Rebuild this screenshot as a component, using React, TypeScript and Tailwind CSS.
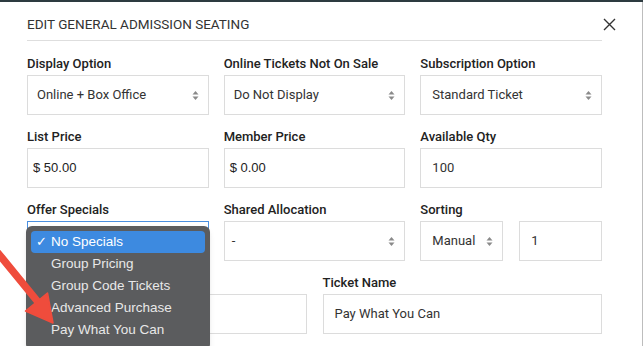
import React from "react";

const SelectArrows = () => (
    <svg width="7" height="11" viewBox="0 0 7 11" className="shrink-0">
        <path d="M3.5 1 L6.5 4.5 L0.5 4.5 Z" fill="#8a8a8a" />
        <path d="M3.5 10 L6.5 6.5 L0.5 6.5 Z" fill="#8a8a8a" />
    </svg>
);

const Label = ({ text }: { text: string }) => (
    <div className="h-[16px] leading-[16px] mb-[3px] text-[13px] font-medium text-[#222] whitespace-nowrap">{text}</div>
);

const SelectBox = ({ value, pl = "pl-[9px]" }: { value: string; pl?: string }) => (
    <div className={`h-[40px] border border-[#dcdcdc] flex items-center justify-between ${pl} pr-[9px] text-[13px] text-[#333]`}>
        <span className="whitespace-nowrap">{value}</span>
        <SelectArrows />
    </div>
);

const TextBox = ({ value, price }: { value: string; price?: boolean }) => (
    <div
        className={
            price
                ? "h-[40px] border border-[#dcdcdc] flex items-center pl-[5px] text-[13px] text-[#222] font-['Liberation_Sans',sans-serif]"
                : "h-[40px] border border-[#dcdcdc] flex items-center pl-[11px] text-[13px] text-[#333]"
        }
    >
        {value}
    </div>
);

const specials = ["No Specials", "Group Pricing", "Group Code Tickets", "Advanced Purchase", "Pay What You Can"];

const App = () => {
    return (
        <div className="relative w-[643px] h-[346px] overflow-hidden bg-white border-t-2 border-[#2d3b40] font-['Roboto',sans-serif]">
            <div className="h-full border-r border-[#bdbdbd] pl-[27px] pr-[40px]">
                {/* header */}
                <section className="h-[39px] pt-[7px] flex items-center justify-between border-b border-[#dedede]">
                    <span className="text-[13.5px] text-[#333]">EDIT GENERAL ADMISSION SEATING</span>
                    <svg width="13" height="13" viewBox="0 0 13 13" className="-mr-[14px]">
                        <path d="M1 1 L12 12 M12 1 L1 12" stroke="#333" strokeWidth="1.4" />
                    </svg>
                </section>

                <section className="flex flex-col gap-y-[14px] pt-[15px]">
                    <section className="grid grid-cols-3 gap-x-[15px]">
                        <div>
                            <Label text="Display Option" />
                            <SelectBox value="Online + Box Office" />
                        </div>
                        <div>
                            <Label text="Online Tickets Not On Sale" />
                            <SelectBox value="Do Not Display" />
                        </div>
                        <div>
                            <Label text="Subscription Option" />
                            <SelectBox value="Standard Ticket" pl="pl-[11px]" />
                        </div>
                    </section>

                    <section className="grid grid-cols-3 gap-x-[15px]">
                        <div>
                            <Label text="List Price" />
                            <TextBox value="$ 50.00" price />
                        </div>
                        <div>
                            <Label text="Member Price" />
                            <TextBox value="$ 0.00" price />
                        </div>
                        <div>
                            <Label text="Available Qty" />
                            <TextBox value="100" />
                        </div>
                    </section>

                    <section className="grid grid-cols-3 gap-x-[15px]">
                        <div className="relative">
                            <Label text="Offer Specials" />
                            <div className="h-[40px] border border-[#4a8fe0]" />
                            {/* open dropdown */}
                            <div className="absolute z-20 top-[24px] -left-[1px] w-[184px] h-[124px] rounded-[6px] bg-[#5b5c5e] pt-[5px] px-[5px] shadow-md font-['Liberation_Sans',sans-serif] text-[13.5px]">
                                {specials.map((item, index) => (
                                    <div
                                        key={index}
                                        className={
                                            index === 0
                                                ? "h-[22px] rounded-[4px] bg-[#3d8ae0] text-white flex items-center"
                                                : "h-[22px] text-[#e8e8e8] flex items-center"
                                        }
                                    >
                                        <span className="w-[20px] pl-[5px] text-[13px]">{index === 0 ? "✓" : ""}</span>
                                        <span className="whitespace-nowrap">{item}</span>
                                    </div>
                                ))}
                            </div>
                        </div>
                        <div>
                            <Label text="Shared Allocation" />
                            <SelectBox value="-" pl="pl-[7px]" />
                        </div>
                        <div>
                            <Label text="Sorting" />
                            <section className="grid grid-cols-2 gap-x-[16px]">
                                <SelectBox value="Manual" pl="pl-[11px]" />
                                <TextBox value="1" />
                            </section>
                        </div>
                    </section>

                    <section className="grid grid-cols-2 gap-x-[16px]">
                        <div>
                            <Label text="" />
                            <TextBox value="" />
                        </div>
                        <div>
                            <Label text="Ticket Name" />
                            <TextBox value="Pay What You Can" />
                        </div>
                    </section>
                </section>
            </div>

            {/* red pointer arrow */}
            <svg className="absolute z-30 left-0 -top-[2px]" width="80" height="346" viewBox="0 0 80 346">
                <path d="M-2 253 L38 302" stroke="#ef4c3c" strokeWidth="7.5" strokeLinecap="round" />
                <path d="M25.5 311 L47.5 293 L53 323 Z" fill="#ef4c3c" stroke="#ef4c3c" strokeWidth="1.5" strokeLinejoin="round" />
            </svg>
        </div>
    );
};

export default App;
